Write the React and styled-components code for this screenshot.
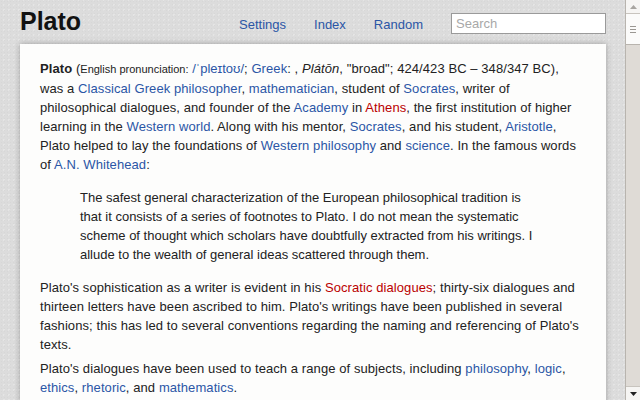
import styled, { createGlobalStyle } from "styled-components";

const GlobalStyle = createGlobalStyle`
  html, body {
    margin: 0;
    padding: 0;
    height: 100%;
    overflow: hidden;
  }
  body {
    font-family: "Liberation Sans", Arial, sans-serif;
    background: #dddddd;
  }
  #root {
    height: 100%;
  }
`;

const Frame = styled.div`
  display: flex;
  width: 640px;
  height: 400px;
`;

const Page = styled.main`
  flex: 1;
  overflow: hidden;
  padding: 0 19px 0 20px;
  background-color: #dcdcdc;
  background-image: radial-gradient(rgba(0, 0, 0, 0.025) 1px, transparent 1px),
    radial-gradient(rgba(255, 255, 255, 0.25) 1px, transparent 1px);
  background-size: 3px 3px, 5px 5px;
  background-position: 0 0, 1px 2px;
`;

const Header = styled.header`
  display: flex;
  align-items: center;
  height: 44px;
`;

const Title = styled.h1`
  margin: 0 0 2px 0;
  font-size: 25px;
  font-weight: 700;
  color: #111;
  flex: 1;
`;

const Nav = styled.nav`
  display: flex;
  gap: 28px;
  margin-right: 28px;
  margin-top: 4px;
`;

const NavLink = styled.a`
  font-size: 13px;
  color: #2b56a6;
  text-decoration: none;
`;

const Search = styled.input`
  width: 155px;
  height: 21px;
  box-sizing: border-box;
  border: 1px solid #9a9a9a;
  background: #fff;
  padding: 2px 4px;
  font-family: "Liberation Sans", Arial, sans-serif;
  font-size: 13px;
  margin-top: 3px;
  outline: none;
  &::placeholder {
    color: #a8a8a8;
  }
`;

const Card = styled.article`
  background: #fdfdfc;
  box-shadow: 0 0 6px rgba(0, 0, 0, 0.28);
  padding: 15px 22px 20px 20px;
  color: #222;
  font-size: 13px;
  line-height: 19px;
  height: 400px;
`;

const Para = styled.p`
  margin: 0 0 5px 0;
  letter-spacing: 0.08px;
`;

const Quote = styled.blockquote`
  margin: 14px 44px 14px 40px;
`;

const Link = styled.a`
  color: ${(p) => (p.$red ? "#ba0000" : "#2b56a6")};
  text-decoration: none;
`;

const Small = styled.span`
  font-size: 11px;
  letter-spacing: 0;
`;

const Ipa = styled.a`
  color: #2b56a6;
  text-decoration: none;
  font-family: "Liberation Sans", "DejaVu Sans", sans-serif;
  font-size: 13px;
  letter-spacing: 0;
`;

const Scrollbar = styled.div`
  width: 15px;
  display: flex;
  flex-direction: column;
  background: #dfdbd6;
  border-left: 1px solid #b8b4ae;
  box-sizing: border-box;
`;

const ArrowButton = styled.div`
  height: 13px;
  display: flex;
  align-items: center;
  justify-content: center;
  background: #f6f5f3;
  border-bottom: ${(p) => (p.$top ? "1px solid #c8c4be" : "none")};
  border-top: ${(p) => (p.$top ? "none" : "1px solid #c8c4be")};
`;

const Thumb = styled.div`
  height: 30px;
  background: #fbfbfa;
  border-bottom: 1px solid #b8b4ae;
  display: flex;
  flex-direction: column;
  align-items: center;
  justify-content: center;
  gap: 2px;
`;

const Grip = styled.span`
  width: 6px;
  height: 1px;
  background: #9a9792;
`;

const Track = styled.div`
  flex: 1;
`;

export default function App() {
  return (
    <>
      <GlobalStyle />
      <Frame>
        <Page>
          <Header>
            <Title>Plato</Title>
            <Nav>
              <NavLink href="#">Settings</NavLink>
              <NavLink href="#">Index</NavLink>
              <NavLink href="#">Random</NavLink>
            </Nav>
            <Search placeholder="Search" />
          </Header>
          <Card>
            <Para>
              <b>Plato</b> (<Small>English pronunciation:</Small>{" "}
              <Ipa href="#">/ˈpleɪtoʊ/</Ipa>; <Link href="#">Greek</Link>: ,{" "}
              <i>Plátōn</i>, "broad"; 424/423 BC – 348/347 BC), was a{" "}
              <Link href="#">Classical Greek philosopher</Link>,{" "}
              <Link href="#">mathematician</Link>, student of{" "}
              <Link href="#">Socrates</Link>, writer of philosophical dialogues,
              and founder of the <Link href="#">Academy</Link> in{" "}
              <Link href="#" $red>Athens</Link>, the first institution of higher
              learning in the <Link href="#">Western world</Link>. Along with his
              mentor, <Link href="#">Socrates</Link>, and his student,{" "}
              <Link href="#">Aristotle</Link>, Plato helped to lay the
              foundations of <Link href="#">Western philosophy</Link> and{" "}
              <Link href="#">science</Link>. In the famous words of{" "}
              <Link href="#">A.N. Whitehead</Link>:
            </Para>
            <Quote>
              The safest general characterization of the European philosophical
              tradition is that it consists of a series of footnotes to Plato. I
              do not mean the systematic scheme of thought which scholars have
              doubtfully extracted from his writings. I allude to the wealth of
              general ideas scattered through them.
            </Quote>
            <Para>
              Plato's sophistication as a writer is evident in his{" "}
              <Link href="#" $red>Socratic dialogues</Link>; thirty-six dialogues
              and thirteen letters have been ascribed to him. Plato's writings
              have been published in several fashions; this has led to several
              conventions regarding the naming and referencing of Plato's texts.
            </Para>
            <Para>
              Plato's dialogues have been used to teach a range of subjects,
              including <Link href="#">philosophy</Link>,{" "}
              <Link href="#">logic</Link>, <Link href="#">ethics</Link>,{" "}
              <Link href="#">rhetoric</Link>, and{" "}
              <Link href="#">mathematics</Link>.
            </Para>
          </Card>
        </Page>
        <Scrollbar>
          <ArrowButton $top>
            <svg width="7" height="4" viewBox="0 0 7 4">
              <path d="M0 4 L3.5 0 L7 4 Z" fill="#a8a5a0" />
            </svg>
          </ArrowButton>
          <Thumb>
            <Grip />
            <Grip />
            <Grip />
          </Thumb>
          <Track />
          <ArrowButton>
            <svg width="7" height="4" viewBox="0 0 7 4">
              <path d="M0 0 L7 0 L3.5 4 Z" fill="#222" />
            </svg>
          </ArrowButton>
        </Scrollbar>
      </Frame>
    </>
  );
}
